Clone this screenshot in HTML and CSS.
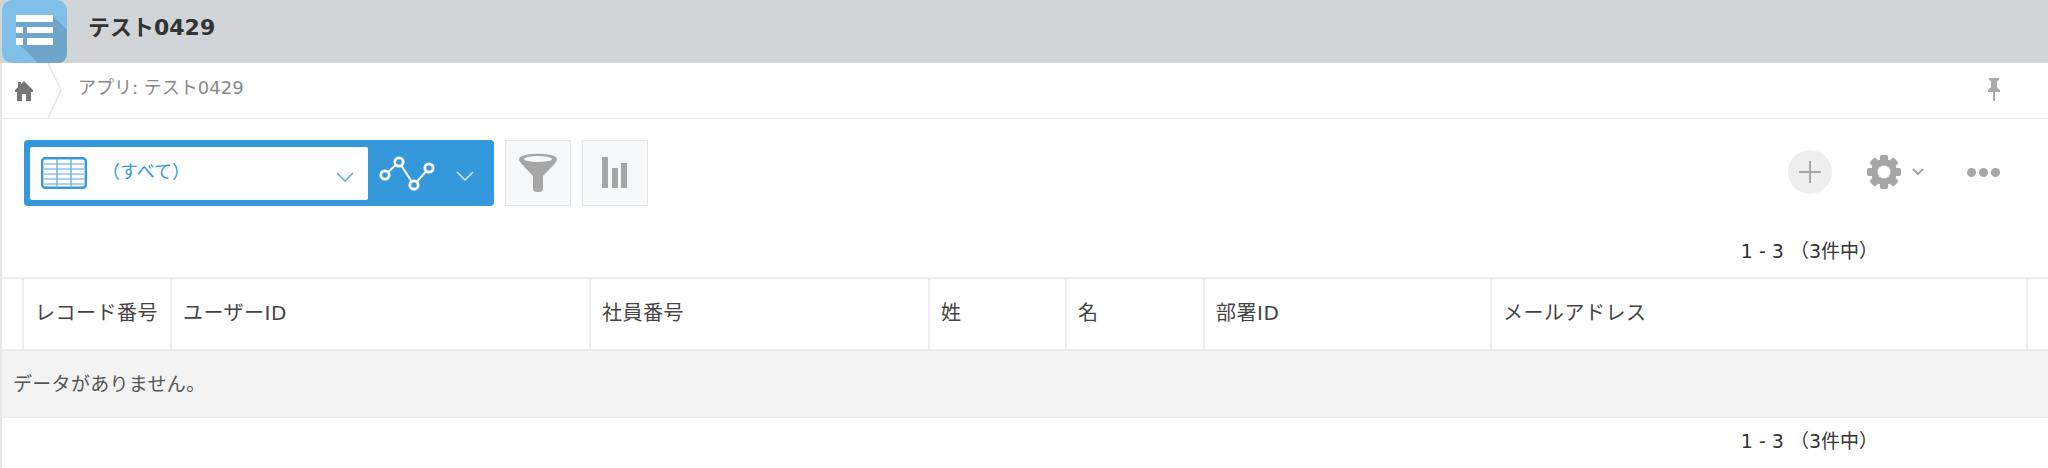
FILE: index.html
```html
<!DOCTYPE html>
<html lang="ja">
<head>
    <meta charset="UTF-8">
    <title>テスト0429</title>
    <link rel="stylesheet" href="styles.css">
</head>
<body>
    <header class="app-header">
        <svg class="app-icon" width="65" height="63" viewBox="0 0 65 63">
            <rect width="65" height="63" rx="10" fill="#7fbfe8"/>
            <path d="M50 15 L65 30 V53 Q65 63 55 63 H36 L14 41 V15 Z" fill="#6fa5c8"/>
            <g fill="#fff">
                <rect x="14" y="15" width="37" height="7"/>
                <rect x="14" y="27" width="7" height="6"/>
                <rect x="25" y="27" width="26" height="6"/>
                <rect x="14" y="38" width="7" height="7"/>
                <rect x="25" y="38" width="26" height="7"/>
            </g>
        </svg>
        <h1 class="app-title">テスト0429</h1>
    </header>

    <main class="content">
        <nav class="breadcrumb">
            <a class="crumb-home">
                <svg width="18" height="20" viewBox="0 0 18 20">
                    <path d="M9 0 L18 9 V11 H16 V20 H11 V13 H7 V20 H2 V11 H0 V9 L3 6 V1 H6 V3 Z" fill="#777"/>
                </svg>
            </a>
            <svg class="crumb-arrow" width="16" height="56" viewBox="0 0 16 56">
                <path d="M1 0 L14 27 L1 55" fill="none" stroke="#e3e7e8" stroke-width="1.5"/>
            </svg>
            <span class="crumb-text">アプリ: テスト0429</span>
            <svg class="pin" width="14" height="23" viewBox="0 0 14 23">
                <path d="M2 0 H12 V2 L10 3 V9 L13 12 V14 H8 V23 H6 V14 H1 V12 L4 9 V3 L2 2 Z" fill="#aaa"/>
            </svg>
        </nav>

        <section class="toolbar">
            <div class="view-picker">
                <div class="view-select">
                    <svg class="table-icon" width="46" height="32" viewBox="0 0 46 32">
                        <rect x="1.2" y="1.2" width="43.6" height="29.6" rx="3" fill="#fff" stroke="#3498db" stroke-width="2.4"/>
                        <path d="M3 7 H43 M3 12 H43 M3 17 H43 M3 22 H43 M3 27 H43" stroke="#a9d3f0" stroke-width="2"/>
                        <path d="M16 2 V30 M30 2 V30" stroke="#6db5e6" stroke-width="1.5"/>
                    </svg>
                    <span class="view-name">（すべて）</span>
                    <svg class="chevron" width="18" height="10" viewBox="0 0 18 10">
                        <path d="M1 1 L9 9 L17 1" fill="none" stroke="#5aaee3" stroke-width="1.6"/>
                    </svg>
                </div>
                <svg class="graph-icon" width="56" height="36" viewBox="0 0 56 36">
                    <path d="M6 19 L20 6 L35 29 L50 12" fill="none" stroke="#fff" stroke-width="2"/>
                    <g fill="#3498db" stroke="#fff" stroke-width="2.8">
                        <circle cx="6" cy="19" r="4.2"/>
                        <circle cx="20" cy="6" r="4.2"/>
                        <circle cx="35" cy="29" r="4.2"/>
                        <circle cx="50" cy="12" r="4.2"/>
                    </g>
                </svg>
                <svg class="chevron-light" width="18" height="10" viewBox="0 0 18 10">
                    <path d="M1 1 L9 9 L17 1" fill="none" stroke="#cfe6f6" stroke-width="1.6"/>
                </svg>
            </div>
            <button class="tool-btn">
                <svg width="40" height="40" viewBox="0 0 40 40">
                    <path d="M1 6 C1 -1 39 -1 39 6 C39 10 30 17 25 23 V36 Q25 39 20 39 Q15 39 15 36 V23 C10 17 1 10 1 6 Z" fill="#a6a6a6"/>
                    <ellipse cx="20" cy="6" rx="14" ry="3" fill="#f7f8fa"/>
                </svg>
            </button>
            <button class="tool-btn">
                <svg width="26" height="32" viewBox="0 0 26 32">
                    <rect x="0" y="0" width="6" height="31" fill="#a6a6a6"/>
                    <rect x="10" y="11" width="6" height="20" fill="#a6a6a6"/>
                    <rect x="19" y="6" width="6" height="25" fill="#a6a6a6"/>
                </svg>
            </button>

            <div class="actions">
                <span class="add-btn">
                    <svg width="24" height="24" viewBox="0 0 24 24">
                        <path d="M12 1 V23 M1 12 H23" stroke="#a6a6a6" stroke-width="2"/>
                    </svg>
                </span>
                <svg class="gear" width="34" height="34" viewBox="0 0 34 34">
                    <g fill="#a6a6a6">
                        <rect x="13" y="0" width="8" height="34" rx="2"/>
                        <rect x="13" y="0" width="8" height="34" rx="2" transform="rotate(45 17 17)"/>
                        <rect x="13" y="0" width="8" height="34" rx="2" transform="rotate(90 17 17)"/>
                        <rect x="13" y="0" width="8" height="34" rx="2" transform="rotate(135 17 17)"/>
                        <circle cx="17" cy="17" r="13"/>
                    </g>
                    <circle cx="17" cy="17" r="6.5" fill="#fff"/>
                </svg>
                <svg class="gear-caret" width="12" height="8" viewBox="0 0 12 8">
                    <path d="M1 1 L6 6 L11 1" fill="none" stroke="#a6a6a6" stroke-width="2"/>
                </svg>
                <span class="more">
                    <i></i><i></i><i></i>
                </span>
            </div>
        </section>

        <div class="pager pager-top">1 - 3 （3件中）</div>

        <table class="records">
            <thead>
                <tr>
                    <th class="col-mark"></th>
                    <th class="col-no">レコード番号</th>
                    <th class="col-user">ユーザーID</th>
                    <th class="col-emp">社員番号</th>
                    <th class="col-sei">姓</th>
                    <th class="col-mei">名</th>
                    <th class="col-dept">部署ID</th>
                    <th class="col-mail">メールアドレス</th>
                    <th class="col-end"></th>
                </tr>
            </thead>
            <tbody>
                <tr>
                    <td colspan="9">データがありません。</td>
                </tr>
            </tbody>
        </table>

        <div class="pager pager-bottom">1 - 3 （3件中）</div>
    </main>
</body>
</html>
```

FILE: styles.css
```css
body {
    margin: 0;
    background: #fff;
    color: #333;
    font-family: "DejaVu Sans", "Noto Sans CJK JP", sans-serif;
    overflow: hidden;
}

/* Header */
.app-header {
    display: flex;
    align-items: center;
    height: 63px;
    background: #d1d5d7;
}

.app-icon {
    margin-left: 2px;
    flex: none;
}

.app-title {
    margin: 0 0 7px 21px;
    font-size: 22px;
    line-height: 28px;
    font-weight: 700;
    color: #333;
}

.content {
    border-left: 2px solid #e8e8e8;
    height: 405px;
}

/* Breadcrumb */
.breadcrumb {
    display: flex;
    align-items: center;
    height: 55px;
    border-bottom: 1px solid #e9eced;
}

.crumb-home {
    display: flex;
    margin-left: 13px;
}

.crumb-arrow {
    margin-left: 14px;
}

.crumb-text {
    margin-left: 15px;
    margin-bottom: 6px;
    font-size: 18px;
    line-height: 24px;
    color: #888;
}

.pin {
    margin-left: auto;
    margin-right: 47px;
    margin-bottom: 2px;
}

/* Toolbar */
.toolbar {
    display: flex;
    align-items: center;
    height: 66px;
    margin-top: 21px;
    padding-left: 22px;
}

.view-picker {
    display: flex;
    align-items: center;
    width: 470px;
    height: 66px;
    box-sizing: border-box;
    padding: 7px 0 6px 6px;
    background: #3498db;
    border-radius: 4px;
}

.view-select {
    display: flex;
    align-items: center;
    width: 338px;
    height: 53px;
    background: #fff;
    border-radius: 2px;
}

.table-icon {
    margin-left: 11px;
    margin-bottom: 2px;
}

.view-name {
    margin-left: 15px;
    margin-bottom: 4px;
    font-size: 18px;
    line-height: 24px;
    color: #3498db;
}

.chevron {
    margin-left: auto;
    margin-right: 14px;
    margin-top: 6px;
}

.graph-icon {
    margin-left: 11px;
}

.chevron-light {
    margin-left: 21px;
    margin-top: 4px;
}

.tool-btn {
    display: flex;
    align-items: center;
    justify-content: center;
    width: 66px;
    height: 66px;
    margin-left: 11px;
    padding: 0;
    background: #f7f8fa;
    border: 1px solid #e3e7e8;
}

.actions {
    display: flex;
    align-items: center;
    margin-left: auto;
    margin-right: 48px;
    margin-bottom: 2px;
}

.add-btn {
    display: flex;
    align-items: center;
    justify-content: center;
    width: 44px;
    height: 44px;
    background: #eee;
    border-radius: 50%;
}

.gear {
    margin-left: 35px;
}

.gear-caret {
    margin-left: 11px;
}

.more {
    display: flex;
    gap: 3px;
    margin-left: 43px;
}

.more i {
    width: 9px;
    height: 9px;
    background: #a6a6a6;
    border-radius: 50%;
}

/* Pager */
.pager {
    font-size: 19px;
    line-height: 24px;
    text-align: right;
    padding-right: 170px;
    color: #333;
}

.pager-top {
    margin-top: 33px;
    margin-bottom: 14px;
}

.pager-bottom {
    margin-top: 11px;
}

/* Records table */
.records {
    width: 2046px;
    table-layout: fixed;
    border-collapse: collapse;
    font-size: 20px;
}

.records th {
    box-sizing: border-box;
    height: 72px;
    padding: 0 0 6px 11px;
    font-weight: 400;
    letter-spacing: 0.5px;
    text-align: left;
    color: #444;
    border-top: 2px solid #ececec;
    border-bottom: 2px solid #ececec;
    border-right: 2px solid #eee;
    white-space: nowrap;
    overflow: hidden;
}

.records td {
    box-sizing: border-box;
    height: 67px;
    padding: 0 0 0 11px;
    font-size: 19px;
    letter-spacing: 0.3px;
    line-height: 24px;
    color: #555;
    background: #f3f3f3;
    border-bottom: 2px solid #eee;
}

.records .col-mark { width: 21px; }
.records .col-no { width: 148px; }
.records .col-user { width: 419px; }
.records .col-emp { width: 339px; }
.records .col-sei { width: 137px; }
.records .col-mei { width: 138px; }
.records .col-dept { width: 287px; }
.records .col-mail { width: 536px; }
.records .col-end { border-right: none; }
```
